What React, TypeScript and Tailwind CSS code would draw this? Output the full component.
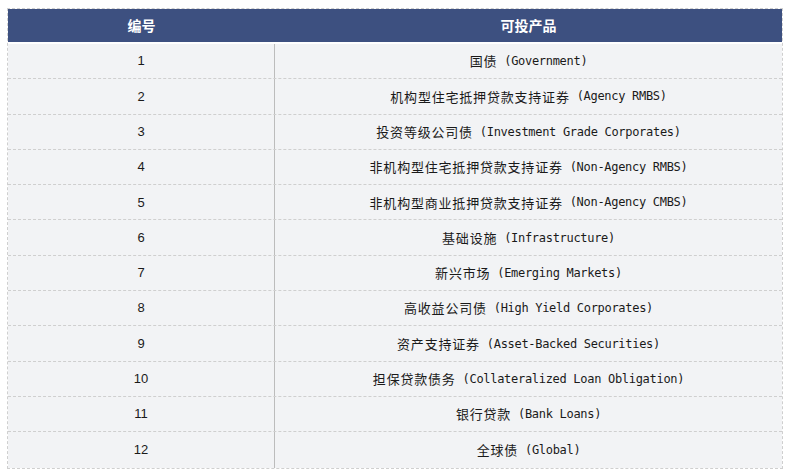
const rows: { zh: string; en: string }[] = [
  { zh: "国债", en: "Government" },
  { zh: "机构型住宅抵押贷款支持证券", en: "Agency RMBS" },
  { zh: "投资等级公司债", en: "Investment Grade Corporates" },
  { zh: "非机构型住宅抵押贷款支持证券", en: "Non-Agency RMBS" },
  { zh: "非机构型商业抵押贷款支持证券", en: "Non-Agency CMBS" },
  { zh: "基础设施", en: "Infrastructure" },
  { zh: "新兴市场", en: "Emerging Markets" },
  { zh: "高收益公司债", en: "High Yield Corporates" },
  { zh: "资产支持证券", en: "Asset-Backed Securities" },
  { zh: "担保贷款债务", en: "Collateralized Loan Obligation" },
  { zh: "银行贷款", en: "Bank Loans" },
  { zh: "全球债", en: "Global" },
];

const zhFont = "font-['Noto_Sans_CJK_SC',sans-serif]";
const enFont = "font-['DejaVu_Sans_Mono',monospace]";

export default function App() {
  return (
    <div className="w-[790px] h-[475px] bg-white pt-[8px] pl-[7px]">
      <div className="w-[776px] border border-dashed border-[#cfcfcf]">
        {/* Header */}
        <div className="grid grid-cols-[267px_1fr] h-[35px] bg-[#3d5080] border-b-2 border-white text-white text-[14px] font-bold">
          <div className={`flex items-center justify-center ${zhFont}`}>编号</div>
          <div className={`flex items-center justify-center ${zhFont}`}>可投产品</div>
        </div>

        {/* Body */}
        {rows.map((row, idx) => (
          <div
            key={idx}
            className={`grid grid-cols-[267px_1fr] h-[35.3px] bg-[#f2f3f5] text-[#1a1a1a] ${
              idx < rows.length - 1 ? "border-b border-dashed border-[#cfcfcf]" : ""
            }`}
          >
            <div className="flex items-center justify-center border-r border-[#bcbcbc] font-['Liberation_Sans',sans-serif] text-[13px]">
              {idx + 1}
            </div>
            <div className="flex items-center justify-center whitespace-pre">
              <span className={`${zhFont} text-[13px] tracking-[0.8px]`}>{row.zh}</span>
              <span className={`${enFont} text-[12px] tracking-[-0.3px]`}>
                {` (${row.en})`}
              </span>
            </div>
          </div>
        ))}
      </div>
    </div>
  );
}
